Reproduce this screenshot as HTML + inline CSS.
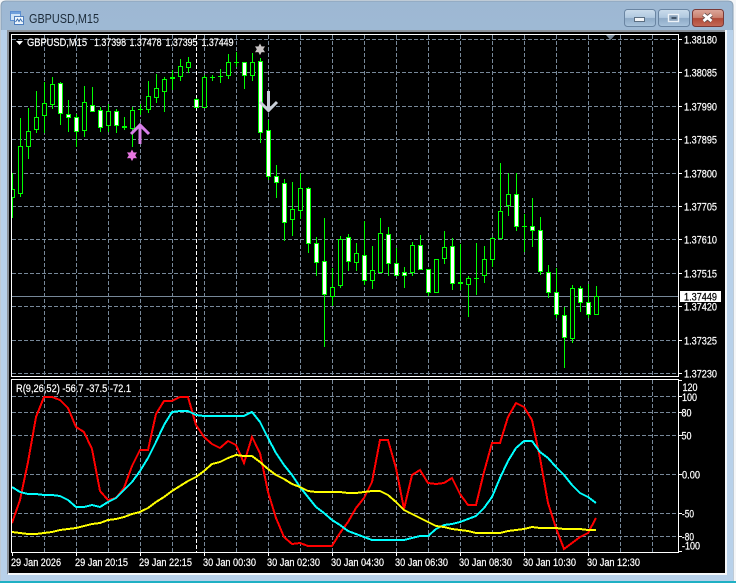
<!DOCTYPE html>
<html><head><meta charset="utf-8"><title>GBPUSD,M15</title>
<style>
html,body{margin:0;padding:0;width:736px;height:583px;overflow:hidden;background:#f4f6f8}
svg{display:block;position:absolute;left:0;top:0}
text{font-family:"Liberation Sans",sans-serif;font-size:11px;fill:#fff;stroke:#fff;stroke-width:.22px}
</style></head><body>
<svg width="736" height="583" viewBox="0 0 736 583" xmlns="http://www.w3.org/2000/svg">
<defs>
<linearGradient id="tb" x1="0" y1="0" x2="0" y2="1"><stop offset="0" stop-color="#9db8d3"/><stop offset=".6" stop-color="#acc5df"/><stop offset="1" stop-color="#b8d1ea"/></linearGradient>
<linearGradient id="bn" x1="0" y1="0" x2="0" y2="1"><stop offset="0" stop-color="#cbdcec"/><stop offset=".48" stop-color="#b0c8df"/><stop offset=".52" stop-color="#8eaac7"/><stop offset="1" stop-color="#a9c4dc"/></linearGradient>
<linearGradient id="cl" x1="0" y1="0" x2="0" y2="1"><stop offset="0" stop-color="#dca89c"/><stop offset=".48" stop-color="#c9816f"/><stop offset=".52" stop-color="#b04a38"/><stop offset="1" stop-color="#c46a58"/></linearGradient>
</defs>
<!-- window frame -->
<path d="M1 582V6Q1 1 6 1H728Q733 1 733 6V582Z" fill="url(#tb)" stroke="#8aa0b4" stroke-width="1"/>
<rect x="1" y="30" width="732" height="551" fill="#b8d1ea"/>
<rect x="7" y="30" width="720" height="2" fill="#8a9199"/>
<rect x="7" y="30" width="2" height="544" fill="#8a9199"/>
<rect x="8" y="573" width="718" height="2" fill="#f4f7fa"/>
<rect x="725" y="30" width="2" height="545" fill="#f4f7fa"/>
<rect x="0" y="581" width="736" height="2" fill="#1fb0c4"/>
<rect x="9" y="32" width="716" height="541" fill="#000"/>
<!-- title icon -->
<rect x="10.5" y="11.5" width="10" height="9" fill="#cfe3f6" stroke="#5d8fd0"/>
<rect x="11" y="12" width="9" height="2" fill="#6fa0dc"/>
<rect x="14.5" y="16.5" width="9" height="8" fill="#eef6fd" stroke="#4f7fbe"/>
<path d="M15.5 22l2-3 1.500 2.500 1.500-2.500 2 3" fill="none" stroke="#3b6fb0"/>
<text x="29" y="23" style="font-size:12.5px;fill:#1c2b3a;stroke:none" textLength="70" lengthAdjust="spacingAndGlyphs">GBPUSD,M15</text>
<!-- buttons -->
<rect x="624.500" y="9.500" width="31" height="17" rx="3" fill="url(#bn)" stroke="#6a85a2"/>
<rect x="634.500" y="17.500" width="10" height="4" fill="#f2f5f8" stroke="#5c6f82"/>
<rect x="658.500" y="9.500" width="31" height="17" rx="3" fill="url(#bn)" stroke="#6a85a2"/>
<rect x="668.500" y="14.500" width="10" height="7" fill="#8ea6be" stroke="#eef3f8" stroke-width="1.400"/>
<rect x="671.500" y="17" width="5" height="2" fill="#44566a"/>
<rect x="692.500" y="9.500" width="31" height="17" rx="3" fill="url(#cl)" stroke="#7a3a38"/>
<path d="M703.500 14.500l8 6.500M711.500 14.500l-8 6.500" stroke="#5e4a48" stroke-width="4.400" fill="none"/>
<path d="M703.500 14.500l8 6.500M711.500 14.500l-8 6.500" stroke="#fff" stroke-width="2.800" fill="none"/>
<!-- grid -->
<g fill="none" stroke="#778899" stroke-width="1" stroke-dasharray="4 2" shape-rendering="crispEdges">
<path d="M12 39.500H678M12 72.500H678M12 106.500H678M12 139.500H678M12 173.500H678M12 206.500H678M12 239.500H678M12 273.500H678M12 306.500H678M12 340.500H678M12 373.500H678"/>
<path d="M12 396.500H678M12 412.500H678M12 435.500H678M12 474.500H678M12 513.500H678M12 536.500H678"/>
<path d="M44.500 35V376M76.500 35V376M108.500 35V376M140.500 35V376M172.500 35V376M204.500 35V376M236.500 35V376M268.500 35V376M300.500 35V376M332.500 35V376M364.500 35V376M396.500 35V376M428.500 35V376M460.500 35V376M492.500 35V376M524.500 35V376M556.500 35V376M588.500 35V376M620.500 35V376M652.500 35V376"/>
<path d="M44.500 380V552M76.500 380V552M108.500 380V552M140.500 380V552M172.500 380V552M204.500 380V552M236.500 380V552M268.500 380V552M300.500 380V552M332.500 380V552M364.500 380V552M396.500 380V552M428.500 380V552M460.500 380V552M492.500 380V552M524.500 380V552M556.500 380V552M588.500 380V552M620.500 380V552M652.500 380V552"/>
</g>
<path d="M196.500 35V552" stroke="#fff" stroke-dasharray="4 2" shape-rendering="crispEdges"/>
<path d="M12 296.500H678" stroke="#778899" shape-rendering="crispEdges"/>
<!-- wicks -->
<path shape-rendering="crispEdges" fill="none" stroke="#00ff00" d="M12.500 173V218M20.500 118V197M28.500 108V159M36.500 91V133M44.500 82V133M52.500 77V109M60.500 82V125M68.500 100V132M76.500 114V147M84.500 86V137M92.500 87V112M100.500 107V132M108.500 104V132M116.500 109V133M124.500 117V130M132.500 107V147M140.500 104V115M148.500 81V113M156.500 74V103M164.500 77V112M172.500 70V90M180.500 59V81M188.500 57V73M196.500 98V108M204.500 75V108M212.500 75V81M220.500 69V83M228.500 54V79M236.500 52V67M244.500 62V89M252.500 53V81M260.500 58V143M268.500 120V180M276.500 165V198M284.500 179V241M292.500 182V236M300.500 173V219M308.500 187V253M316.500 237V276M324.500 218V347M332.500 268V306M340.500 236V288M348.500 234V271M356.500 243V271M364.500 221V285M372.500 246V289M380.500 218V272M388.500 227V276M396.500 248V276M404.500 267V288M412.500 242V276M420.500 235V269M428.500 269V296M444.500 231V264M452.500 238V290M460.500 244V290M468.500 276V317M476.500 243V295M484.500 246V283M492.500 237V267M500.500 163V238M508.500 173V216M516.500 173V231M524.500 214V252M532.500 198V247M540.500 217V275M548.500 265V298M556.500 268V318M564.500 307V368M572.500 285V343M580.500 286V312M588.500 284V318M596.500 286V315"/>
<!-- doji -->
<path shape-rendering="crispEdges" fill="none" stroke="#00ff00" d="M138 109.500h5M210 77.500h5M218 76.500h5M234 62.500h5M474 278.500h5M522 226.500h5M458 282.500h5M458 283.500h5"/>
<!-- hollow bodies -->
<path shape-rendering="crispEdges" fill="#000" stroke="#00ff00" d="M12 189.500h2.500v8H12M18.500 146.500h4v47h-4zM26.500 131.500h4v15h-4zM34.500 117.500h4v12h-4zM42.500 103.500h4v12h-4zM50.500 84.500h4v20h-4zM82.500 102.500h4v28h-4zM106.500 111.500h4v14h-4zM130.500 110.500h4v18h-4zM146.500 96.500h4v13h-4zM154.500 88.500h4v9h-4zM162.500 79.500h4v12h-4zM178.500 66.500h4v10h-4zM186.500 62.500h4v5h-4zM202.500 77.500h4v30h-4zM226.500 62.500h4v13h-4zM250.500 62.500h4v13h-4zM290.500 209.500h4v10h-4zM298.500 188.500h4v22h-4zM330.500 287.500h4v9h-4zM338.500 239.500h4v46h-4zM354.500 253.500h4v9h-4zM370.500 270.500h4v10h-4zM378.500 233.500h4v39h-4zM410.500 245.500h4v27h-4zM434.500 259.500h4v33h-4zM442.500 247.500h4v11h-4zM466.500 278.500h4v6h-4zM482.500 259.500h4v16h-4zM490.500 238.500h4v21h-4zM498.500 211.500h4v27h-4zM506.500 194.500h4v11h-4zM570.500 288.500h4v50h-4zM594.500 296.500h4v18h-4z"/>
<!-- filled bodies -->
<path shape-rendering="crispEdges" fill="#fff" stroke="#00ff00" d="M58.500 83.500h4v30h-4zM66.500 114.500h4v3h-4zM74.500 117.500h4v14h-4zM90.500 105.500h4v6h-4zM98.500 110.500h4v17h-4zM114.500 111.500h4v14h-4zM122.500 126.500h4v1h-4zM170.500 77.500h4v1h-4zM194.500 99.500h4v8h-4zM242.500 62.500h4v13h-4zM258.500 61.500h4v71h-4zM266.500 130.500h4v46h-4zM274.500 176.500h4v6h-4zM282.500 183.500h4v39h-4zM306.500 188.500h4v55h-4zM314.500 243.500h4v19h-4zM322.500 261.500h4v33h-4zM346.500 237.500h4v24h-4zM362.500 255.500h4v25h-4zM386.500 234.500h4v29h-4zM394.500 263.500h4v12h-4zM402.500 272.500h4v3h-4zM418.500 245.500h4v24h-4zM426.500 269.500h4v23h-4zM450.500 246.500h4v37h-4zM514.500 194.500h4v32h-4zM530.500 226.500h4v4h-4zM538.500 230.500h4v41h-4zM546.500 272.500h4v20h-4zM554.500 292.500h4v22h-4zM562.500 315.500h4v22h-4zM578.500 288.500h4v14h-4zM586.500 302.500h4v12h-4z"/>
<!-- markers -->
<g fill="none" stroke="#d77fe8" stroke-width="3">
<path d="M140 144V125"/><path d="M131 134L140 125L149 134"/>
</g>
<path d="M132 149.500l1.600 3 3.400-.1-1.800 2.900 1.800 2.900-3.400-.1-1.600 3-1.600-3-3.400.1 1.800-2.900-1.800-2.900 3.400.1z" fill="#e777e0"/>
<path d="M260 43.500l1.600 3 3.400-.1-1.800 2.900 1.800 2.900-3.400-.1-1.600 3-1.600-3-3.400.1 1.800-2.900-1.800-2.900 3.400.1z" fill="#c9c4c4"/>
<g fill="none" stroke="#c8cfd8" stroke-width="3">
<path d="M268.500 91V110"/><path d="M260 102L268.500 110.500L277 102"/>
</g>
<!-- indicator lines -->
<polyline shape-rendering="crispEdges" fill="none" stroke="#ff0000" stroke-width="2" points="12,523 20,500 28,462 36,417 44,397 52,397 60,400 68,408 76,427 84,432 92,449 100,491 108,500 116,498 124,488 132,466 140,450 148,450 156,414 164,401 172,401 180,397 188,397 196,425 204,437 212,444 220,448 228,441 236,445 244,463 252,437 260,453 268,492 276,518 284,537 292,544 300,543 308,546 316,546 324,546 332,546 340,533 348,522 356,508 364,498 372,482 380,440 388,440 396,468 404,509 412,475 420,470 428,483 436,484 444,483 452,478 460,494 468,505 476,505 484,472 492,443 500,443 508,417 516,403 524,407 532,420 540,458 548,503 556,528 564,549 572,543 580,537 588,533 596,518"/>
<polyline shape-rendering="crispEdges" fill="none" stroke="#00ffff" stroke-width="2" points="12,487 20,492 28,494 36,494 44,495 52,495 60,496 68,500 76,507 84,507 92,505 100,507 108,502 116,498 124,490 132,482 140,471 148,458 156,442 164,425 172,412 180,411 188,411 196,415 204,416 212,416 220,416 228,416 236,416 244,416 252,412 260,422 268,438 276,453 284,465 292,475 300,487 308,497 316,507 324,513 332,520 340,525 348,531 356,534 364,537 372,540 380,540 388,540 396,540 404,540 412,538 420,536 428,536 436,529 444,525 452,524 460,522 468,519 476,516 484,508 492,497 500,478 508,461 516,448 524,441 532,441 540,452 548,458 556,467 564,475 572,485 580,493 588,497 596,503"/>
<polyline shape-rendering="crispEdges" fill="none" stroke="#ffff00" stroke-width="2" points="12,532 20,533 28,534 36,534 44,533 52,532 60,530 68,529 76,528 84,526 92,524 100,523 108,520 116,519 124,517 132,514 140,512 148,508 156,502 164,497 172,491 180,486 188,481 196,477 204,471 212,464 220,462 228,458 236,455 244,456 252,456 260,462 268,469 276,475 284,479 292,484 300,487 308,491 316,492 324,492 332,492 340,492 348,493 356,493 364,492 372,491 380,491 388,495 396,502 404,510 412,514 420,518 428,522 436,526 444,527 452,529 460,530 468,531 476,533 484,533 492,533 500,533 508,531 516,530 524,529 532,527 540,528 548,528 556,528 564,529 572,529 580,529 588,530 596,530"/>
<!-- pane frames -->
<g fill="none" stroke="#fff" shape-rendering="crispEdges">
<path d="M11.500 34.500H678.500V376.500H11.500Z"/>
<path d="M11.500 379.500H678.500V552.500H11.500Z"/>
<path d="M679 39.500h3M679 72.500h3M679 106.500h3M679 139.500h3M679 173.500h3M679 206.500h3M679 239.500h3M679 273.500h3M679 306.500h3M679 340.500h3M679 373.500h3M679 380.500h3M679 396.500h3M679 412.500h3M679 435.500h3M679 474.500h3M679 513.500h3M679 536.500h3M679 551.500h3"/>
<path d="M12.500 553v3M76.500 553v3M140.500 553v3M204.500 553v3M268.500 553v3M332.500 553v3M396.500 553v3M460.500 553v3M524.500 553v3M588.500 553v3"/>
</g>
<path d="M606 35h9l-4.500 5z" fill="#778899"/>
<path d="M16 41h7l-3.500 4z" fill="#fff"/>
<!-- legend -->
<text x="27" y="46" textLength="60" lengthAdjust="spacingAndGlyphs">GBPUSD,M15</text>
<text x="94" y="46" textLength="32" lengthAdjust="spacingAndGlyphs">1.37398</text>
<text x="129.500" y="46" textLength="32" lengthAdjust="spacingAndGlyphs">1.37478</text>
<text x="165.500" y="46" textLength="32" lengthAdjust="spacingAndGlyphs">1.37395</text>
<text x="201.500" y="46" textLength="32" lengthAdjust="spacingAndGlyphs">1.37449</text>
<text x="16" y="392" textLength="115" lengthAdjust="spacingAndGlyphs">R(9,26,52) -56.7 -37.5 -72.1</text>
<!-- price axis -->
<g>
<text x="684" y="43.500" textLength="33" lengthAdjust="spacingAndGlyphs">1.38180</text>
<text x="684" y="76.500" textLength="33" lengthAdjust="spacingAndGlyphs">1.38085</text>
<text x="684" y="110.500" textLength="33" lengthAdjust="spacingAndGlyphs">1.37990</text>
<text x="684" y="143.500" textLength="33" lengthAdjust="spacingAndGlyphs">1.37895</text>
<text x="684" y="177.500" textLength="33" lengthAdjust="spacingAndGlyphs">1.37800</text>
<text x="684" y="210.500" textLength="33" lengthAdjust="spacingAndGlyphs">1.37705</text>
<text x="684" y="243.500" textLength="33" lengthAdjust="spacingAndGlyphs">1.37610</text>
<text x="684" y="277.500" textLength="33" lengthAdjust="spacingAndGlyphs">1.37515</text>
<text x="684" y="310.500" textLength="33" lengthAdjust="spacingAndGlyphs">1.37420</text>
<text x="684" y="344.500" textLength="33" lengthAdjust="spacingAndGlyphs">1.37325</text>
<text x="684" y="377.500" textLength="33" lengthAdjust="spacingAndGlyphs">1.37230</text>
</g>
<rect x="680" y="291" width="41" height="11" fill="#fff"/>
<text x="684" y="300.500" textLength="33" lengthAdjust="spacingAndGlyphs" style="fill:#000;stroke:#000">1.37449</text>
<!-- indicator axis -->
<text x="682.500" y="391" textLength="15" lengthAdjust="spacingAndGlyphs">120</text>
<text x="682" y="401" textLength="15" lengthAdjust="spacingAndGlyphs">100</text>
<text x="681.500" y="416.500" textLength="10" lengthAdjust="spacingAndGlyphs">80</text>
<text x="681.500" y="439.500" textLength="10" lengthAdjust="spacingAndGlyphs">50</text>
<text x="682" y="478.500" textLength="18" lengthAdjust="spacingAndGlyphs">0.00</text>
<text x="682" y="517.500" textLength="12" lengthAdjust="spacingAndGlyphs">-50</text>
<text x="682" y="540.500" textLength="12" lengthAdjust="spacingAndGlyphs">-80</text>
<text x="682" y="549.500" textLength="18" lengthAdjust="spacingAndGlyphs">-100</text>
<!-- time axis -->
<text x="11" y="566" textLength="50" lengthAdjust="spacingAndGlyphs">29 Jan 2026</text>
<text x="75" y="566" textLength="53" lengthAdjust="spacingAndGlyphs">29 Jan 20:15</text>
<text x="139" y="566" textLength="53" lengthAdjust="spacingAndGlyphs">29 Jan 22:15</text>
<text x="203" y="566" textLength="53" lengthAdjust="spacingAndGlyphs">30 Jan 00:30</text>
<text x="267" y="566" textLength="53" lengthAdjust="spacingAndGlyphs">30 Jan 02:30</text>
<text x="331" y="566" textLength="53" lengthAdjust="spacingAndGlyphs">30 Jan 04:30</text>
<text x="395" y="566" textLength="53" lengthAdjust="spacingAndGlyphs">30 Jan 06:30</text>
<text x="459" y="566" textLength="53" lengthAdjust="spacingAndGlyphs">30 Jan 08:30</text>
<text x="523" y="566" textLength="53" lengthAdjust="spacingAndGlyphs">30 Jan 10:30</text>
<text x="587" y="566" textLength="53" lengthAdjust="spacingAndGlyphs">30 Jan 12:30</text>
</svg>
</body></html>
